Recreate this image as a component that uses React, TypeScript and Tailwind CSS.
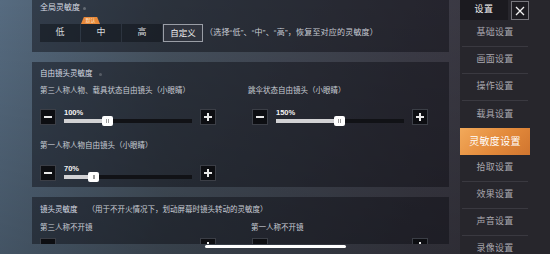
import React from "react";

const FONT = "font-['Liberation_Sans','Noto_Sans_CJK_SC',sans-serif]";

function Box({ plus }: { plus?: boolean }) {
  return (
    <div className="relative w-[16px] h-[16px] shrink-0 bg-[#0d0e12] border border-[#3b3e46] flex items-center justify-center">
      <div className="w-[8px] h-[1.5px] bg-[#e8e8e8]" />
      {plus && <div className="absolute w-[1.5px] h-[8px] bg-[#e8e8e8]" />}
    </div>
  );
}

function Slider({ pct, label }: { pct: number; label: string }) {
  return (
    <div className="flex items-center h-[16px]">
      <Box />
      <div className="relative ml-[8px] w-[128px] h-[16px]">
        <div className="absolute left-0 top-0 text-[7.5px] leading-[8px] font-bold text-[#f2f2f2]">{label}</div>
        <div className="absolute left-0 right-0 top-[10px] h-[3.5px] bg-[#111216]" />
        <div className="absolute left-0 top-[10px] h-[4px] bg-[#d2d2d4]" style={{ width: `${pct * 100}%` }} />
        <div
          className="absolute top-[6.5px] w-[11px] h-[10px] -ml-[5.5px] bg-white rounded-[2px] flex items-center justify-center gap-[1px]"
          style={{ left: `${pct * 100}%` }}
        >
          <div className="w-[0.5px] h-[4px] bg-[#9a9a9a]" />
          <div className="w-[0.5px] h-[4px] bg-[#9a9a9a]" />
        </div>
      </div>
      <div className="ml-[8px]">
        <Box plus />
      </div>
    </div>
  );
}

const menu = ["基础设置", "画面设置", "操作设置", "载具设置", "灵敏度设置", "拾取设置", "效果设置", "声音设置", "录像设置"];

export default function App() {
  return (
    <div
      className={`${FONT} relative w-[550px] h-[254px] overflow-hidden flex bg-[linear-gradient(180deg,rgba(0,0,0,0)_0%,rgba(0,0,0,0.22)_100%),linear-gradient(90deg,#566b80_0%,#46525f_30%,#3c3c47_75%,#38343d_100%)]`}
    >
      {/* main content */}
      <div className="w-[449px] shrink-0 pl-[32px] flex flex-col gap-[10px]">
        {/* panel 1 */}
        <div className="h-[52px] shrink-0 bg-[#0b0c12]/45 pl-[8px]">
          <div className="mt-[3px] h-[10px] flex items-center text-[8px] text-[#d8dce4]">
            全局灵敏度
            <span className="ml-[3px] w-[3px] h-[3px] rounded-full bg-white/25" />
          </div>
          <div className="mt-[11px] flex items-center h-[18px]">
            <div className="flex gap-[1px]">
              <div className="w-[40px] h-[18px] bg-[#0c0f16]/50 flex items-center justify-center text-[9px] text-[#d6d8dc]">低</div>
              <div className="relative w-[40px] h-[18px] bg-[#0c0f16]/50 flex items-center justify-center text-[9px] text-[#d6d8dc]">
                中
                <div className="absolute left-0 -top-[7px] w-[19px] h-[7px] bg-[#e8893a] [clip-path:polygon(15%_0,85%_0,100%_100%,0_100%)] flex items-center justify-center text-[5px] leading-none text-[#fde2c4]">
                  默认
                </div>
              </div>
              <div className="w-[40px] h-[18px] bg-[#0c0f16]/50 flex items-center justify-center text-[9px] text-[#d6d8dc]">高</div>
              <div className="w-[40px] h-[18px] bg-[#30343e] border border-[#9a9ea6] flex items-center justify-center text-[8.5px] text-[#f0f0f0]">自定义</div>
            </div>
            <div className="ml-[2px] text-[8px] text-[#c8ccd4] whitespace-nowrap tracking-[0.2px]">（选择“低”、“中”、“高”，恢复至对应的灵敏度）</div>
          </div>
        </div>

        {/* panel 2 */}
        <div className="h-[125px] shrink-0 bg-[#0b0c12]/45 pl-[8px]">
          <div className="mt-[7px] h-[10px] flex items-center text-[7.5px] text-[#d8dce4]">
            自由镜头灵敏度
            <span className="ml-[6px] w-[3px] h-[3px] rounded-full bg-white/20" />
          </div>
          <div className="grid grid-cols-[208px_1fr]">
            <div>
              <div className="mt-[7px] h-[10px] flex items-center text-[7.5px] text-[#c8ccd4] whitespace-nowrap">第三人称人物、载具状态自由镜头（小眼睛）</div>
              <div className="mt-[13px]">
                <Slider pct={0.336} label="100%" />
              </div>
              <div className="mt-[16px] h-[10px] flex items-center text-[7.5px] text-[#c8ccd4] whitespace-nowrap">第一人称人物自由镜头（小眼睛）</div>
              <div className="mt-[14px]">
                <Slider pct={0.234} label="70%" />
              </div>
            </div>
            <div>
              <div className="mt-[7px] h-[10px] flex items-center text-[7.5px] text-[#c8ccd4] whitespace-nowrap">跳伞状态自由镜头（小眼睛）</div>
              <div className="mt-[13px] pl-[4px]">
                <Slider pct={0.496} label="150%" />
              </div>
            </div>
          </div>
        </div>

        {/* panel 3 */}
        <div className="h-[47px] shrink-0 overflow-hidden bg-[#0b0c12]/45 pl-[8px]">
          <div className="mt-[8px] h-[10px] flex items-center text-[7.5px] text-[#d8dce4] whitespace-nowrap">
            镜头灵敏度
            <span className="ml-[10px] text-[#c8ccd4]">（用于不开火情况下，划动屏幕时镜头转动的灵敏度）</span>
          </div>
          <div className="grid grid-cols-[208px_1fr]">
            <div>
              <div className="mt-[8px] h-[10px] flex items-center text-[7.5px] text-[#c8ccd4]">第三人称不开镜</div>
              <div className="mt-[5px]">
                <Slider pct={0.3} label="" />
              </div>
            </div>
            <div>
              <div className="mt-[8px] h-[10px] pl-[3px] flex items-center text-[7.5px] text-[#c8ccd4]">第一人称不开镜</div>
              <div className="mt-[5px] pl-[4px]">
                <Slider pct={0.3} label="" />
              </div>
            </div>
          </div>
        </div>
      </div>

      {/* strip */}
      <div className="w-[11px] shrink-0" />

      {/* sidebar */}
      <div className="w-[90px] shrink-0 bg-[#27262c] flex flex-col">
        <div className="h-[20px] flex">
          <div className="w-[48px] h-[20px] bg-[#1b1a1f] flex items-center justify-center text-[9px] text-[#f0f0f0] tracking-[0.5px]">设置</div>
          <div className="ml-[3px] mt-[1px] w-[18px] h-[19px] bg-[#1d1c21] border border-[#77767c] flex items-center justify-center">
            <svg width="10" height="10" viewBox="0 0 10 10">
              <path d="M1 1L9 9M9 1L1 9" stroke="#f2f2f2" strokeWidth="1.3" />
            </svg>
          </div>
        </div>
        <div className="w-[70px] flex flex-col">
          {menu.map((m, i) =>
            i === 4 ? (
              <div
                key={m}
                className="h-[27px] bg-[linear-gradient(135deg,#f2a95a_0%,#e38a3b_55%,#d0752f_100%)] flex items-center justify-center text-[10px] text-white tracking-[0.3px]"
              >
                {m}
              </div>
            ) : (
              <div
                key={m}
                className={`h-[27px] mx-[2px] flex items-center justify-center text-[9px] text-[#aaa8af] tracking-[0.3px] ${i === 3 ? "" : "border-b border-[#3a3940]"}`}
              >
                {m}
              </div>
            )
          )}
        </div>
      </div>

      {/* home indicator */}
      <div className="absolute left-[205px] top-[245px] w-[141px] h-[3px] rounded-full bg-white" />
    </div>
  );
}
